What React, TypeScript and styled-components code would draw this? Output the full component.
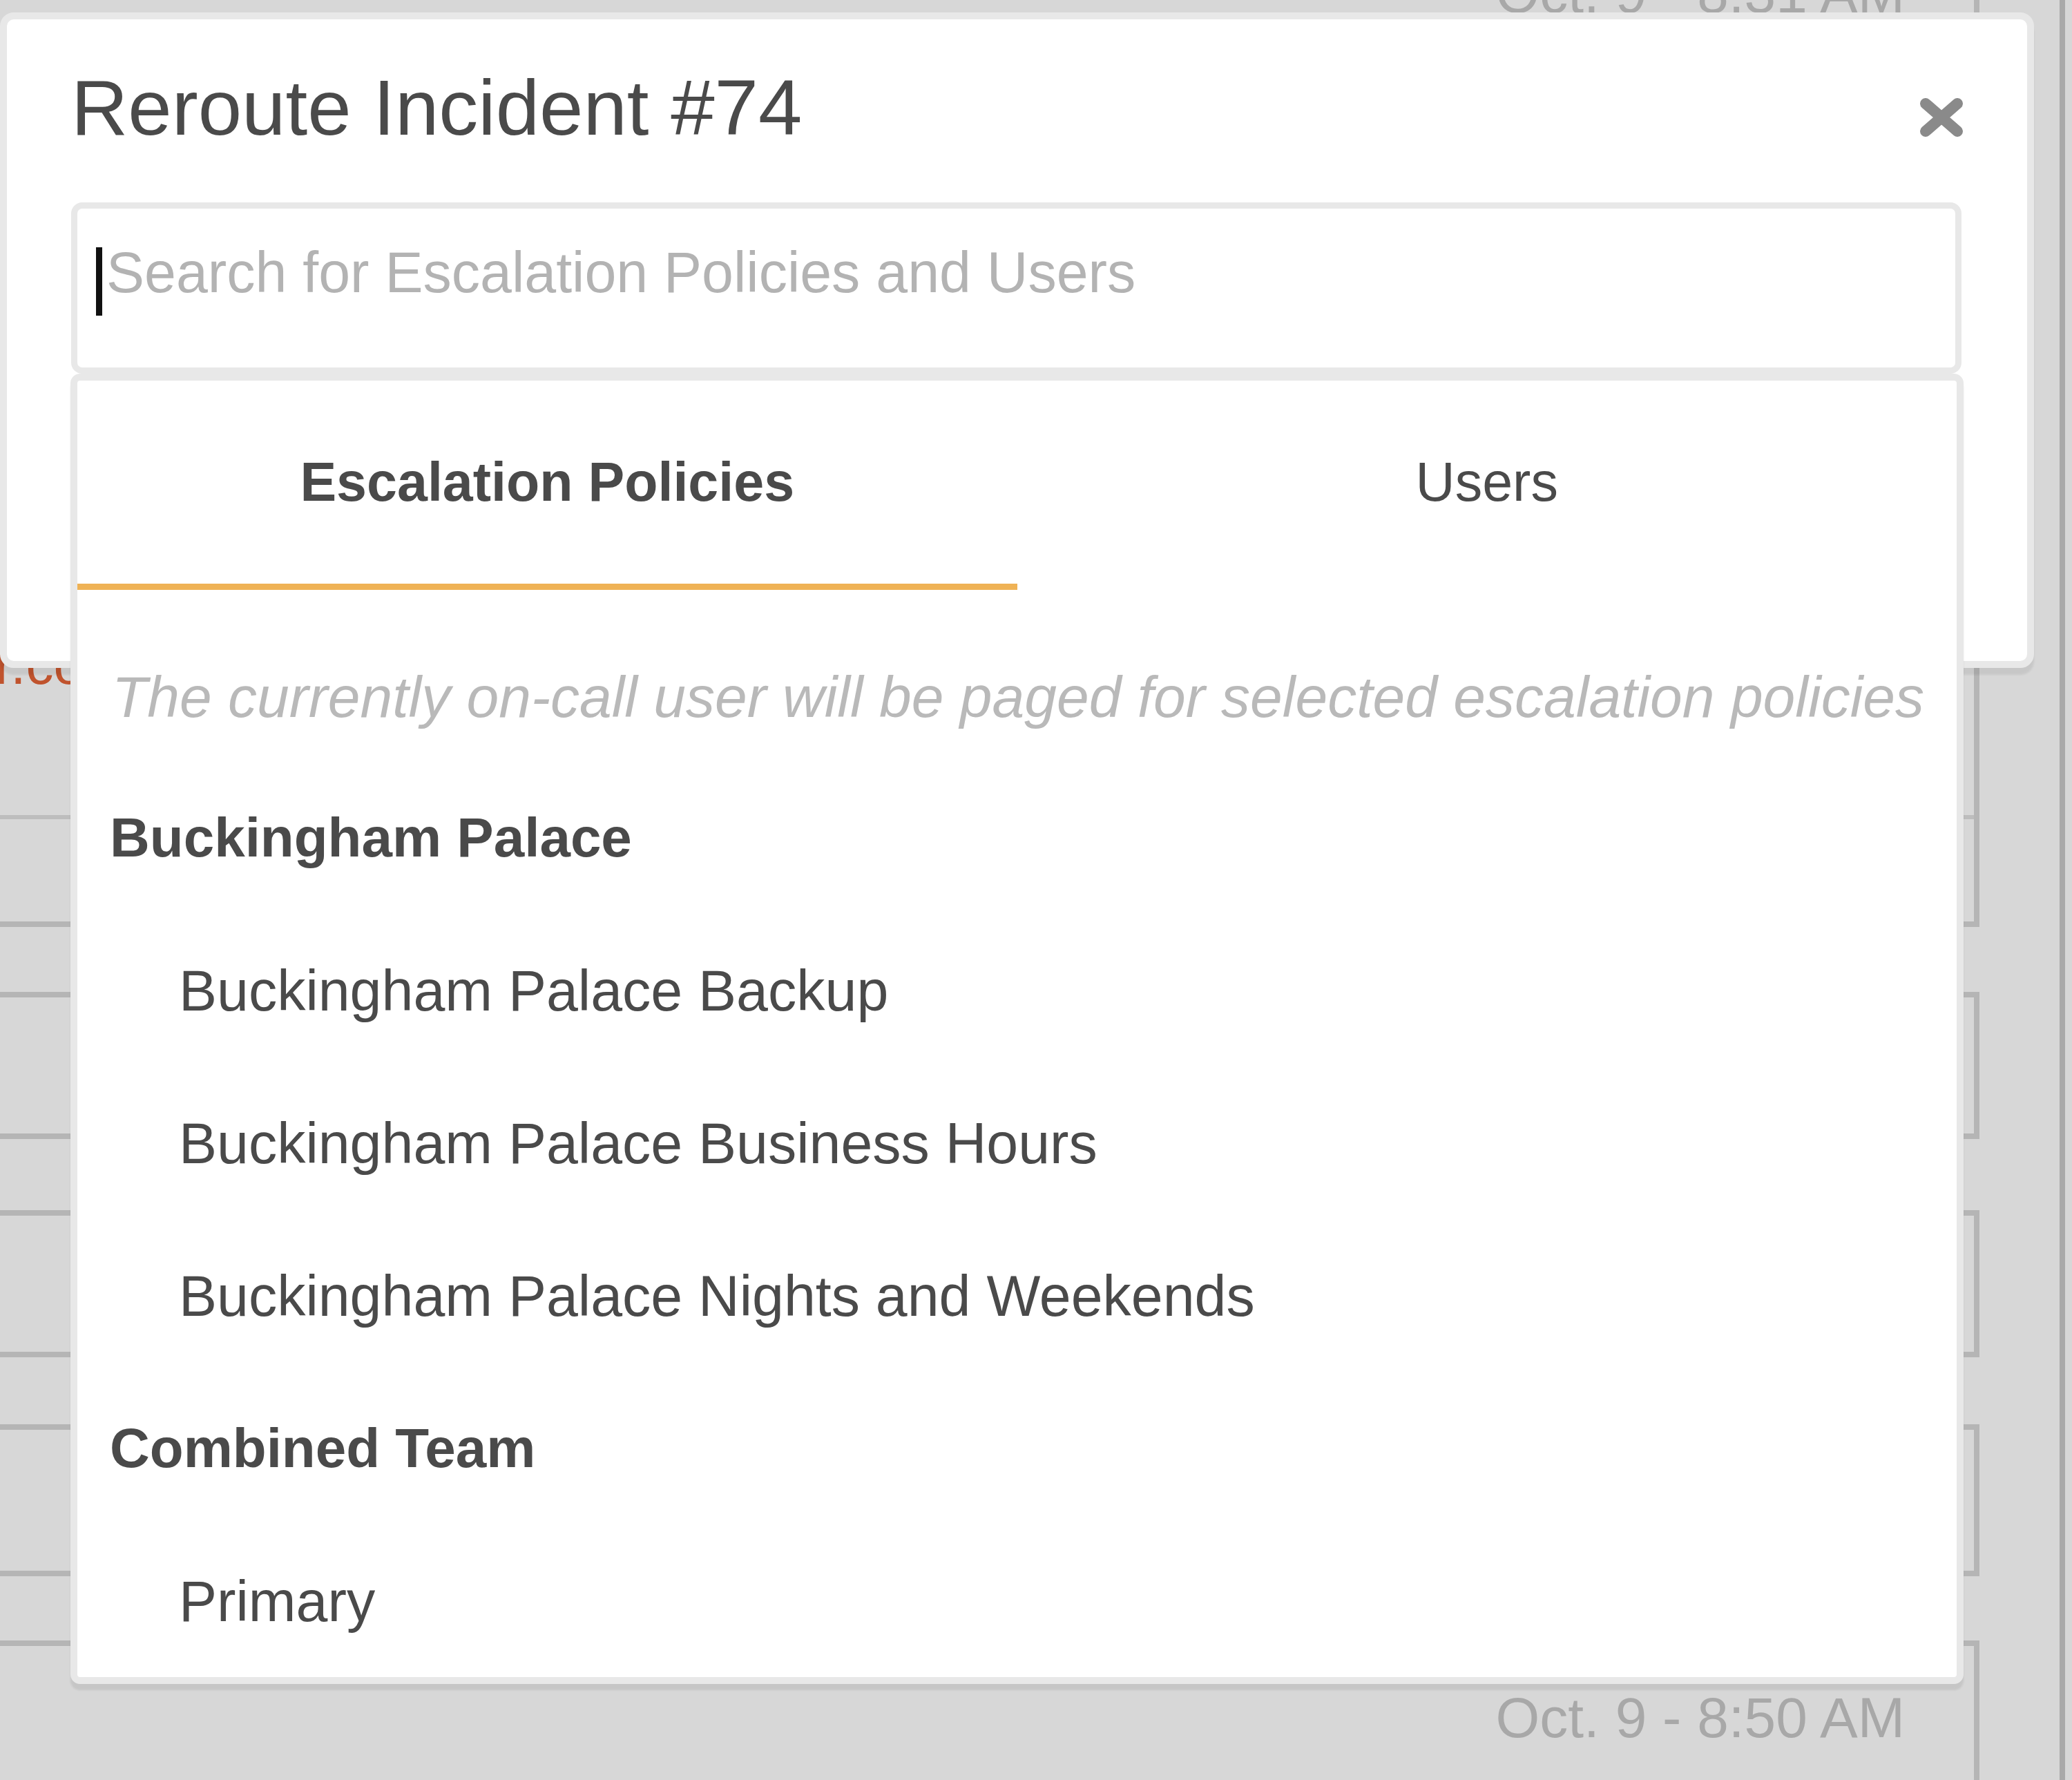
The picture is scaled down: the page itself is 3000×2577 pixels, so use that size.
import styled, { createGlobalStyle } from "styled-components";

const GlobalStyle = createGlobalStyle`
  html, body {
    margin: 0;
    padding: 0;
    background: #d7d7d7;
  }
  * {
    box-sizing: border-box;
  }
`;

const Screen = styled.div`
  position: relative;
  width: 3000px;
  height: 2577px;
  overflow: hidden;
  background: #d7d7d7;
  font-family: "Liberation Sans", Arial, sans-serif;
`;

/* ---------- dimmed page behind the modal ---------- */

const PageRow = styled.div`
  display: flex;
  height: 100%;
`;

const Timeline = styled.div`
  flex: none;
  width: 2906px;
  margin: -122px 0 0 -40px;
  display: flex;
  flex-direction: column;
`;

const Card = styled.div<{ $h: number; $gap: number }>`
  flex: none;
  height: ${(p) => p.$h}px;
  margin-top: ${(p) => p.$gap}px;
  border: 8px solid #b5b5b5;
  border-left: 0;
  display: flex;
  flex-direction: column;
`;

const Stamp = styled.div`
  align-self: flex-end;
  padding: 57px 100px 0 0;
  font-size: 82px;
  line-height: 94px;
  color: #a8a8a8;
  white-space: nowrap;
`;

const SourceLink = styled.div`
  margin: 880px 0 0 -207px;
  font-size: 80px;
  line-height: 92px;
  color: #c0532d;
  white-space: nowrap;
`;

const CardFooter = styled.div`
  margin-top: auto;
  height: 154px;
  border-top: 6px solid #bdbdbd;
`;

const SideRail = styled.div`
  flex: none;
  margin-left: 116px;
  height: 100%;
  border-left: 8px solid #a9a9a9;
`;

/* ---------- modal ---------- */

const Modal = styled.div`
  position: absolute;
  top: 18px;
  left: 0;
  width: 2945px;
  height: 949px;
  padding: 62px 95px 0 93px;
  background: #fff;
  border: 10px solid #e8e8e8;
  border-radius: 20px;
  box-shadow: 0 10px 3px rgba(0, 0, 0, 0.07);
`;

const Header = styled.div`
  display: flex;
  justify-content: space-between;
  align-items: flex-start;
`;

const Title = styled.h2`
  margin: 0;
  font-size: 114px;
  line-height: 131px;
  font-weight: 400;
  color: #4a4a4a;
`;

const CloseButton = styled.button`
  margin: 52px -3px 0 0;
  padding: 0;
  width: 64px;
  height: 56px;
  border: 0;
  background: none;
  display: flex;
`;

const SearchWrap = styled.div`
  position: relative;
  margin-top: 72px;
`;

const SearchBox = styled.div`
  height: 248px;
  padding: 45px 0 0 27px;
  border: 9px solid #e8e8e8;
  border-radius: 16px;
  display: flex;
  align-items: flex-start;
`;

const Caret = styled.span`
  flex: none;
  width: 9px;
  height: 99px;
  margin-top: 11px;
  background: #111;
`;

const Placeholder = styled.span`
  margin-left: 6px;
  font-size: 82.5px;
  line-height: 94px;
  color: #b3b3b3;
  white-space: nowrap;
`;

const Dropdown = styled.div`
  position: absolute;
  top: 100%;
  left: -1px;
  right: -3px;
  z-index: 2;
  background: #fff;
  border: 10px solid #e8e8e8;
  border-radius: 14px;
  box-shadow: 0 9px 3px rgba(0, 0, 0, 0.08);
`;

const Tabs = styled.div`
  display: flex;
`;

const Tab = styled.div<{ $active?: boolean }>`
  flex: 1;
  height: 303px;
  display: flex;
  align-items: center;
  justify-content: center;
  border-bottom: 9px solid ${(p) => (p.$active ? "#efb255" : "transparent")};
  font-size: 79px;
  line-height: 92px;
  font-weight: ${(p) => (p.$active ? 700 : 400)};
  color: #4a4a4a;
`;

const Hint = styled.div`
  padding: 107px 40px 45px 50px;
  font-size: 84px;
  line-height: 96px;
  font-style: italic;
  color: #b9b9b9;
  white-space: nowrap;
`;

const List = styled.div`
  display: flex;
  flex-direction: column;
`;

const Row = styled.div<{ $group?: boolean }>`
  height: 221px;
  display: flex;
  align-items: center;
  padding-left: ${(p) => (p.$group ? 47 : 147)}px;
  font-size: ${(p) => (p.$group ? 80 : 82.5)}px;
  line-height: 94px;
  font-weight: ${(p) => (p.$group ? 700 : 400)};
  color: #4a4a4a;
  white-space: nowrap;
`;

const cards = [
  { h: 1464, gap: 0, stamp: "Oct. 9 - 8:31 AM", first: true },
  { h: 213, gap: 94, stamp: "Oct. 9 - 8:35 AM" },
  { h: 213, gap: 103, stamp: "Oct. 9 - 8:40 AM" },
  { h: 220, gap: 97, stamp: "Oct. 9 - 8:45 AM" },
  { h: 500, gap: 93, stamp: "Oct. 9 - 8:50 AM" },
];

const policies = [
  { label: "Buckingham Palace", group: true },
  { label: "Buckingham Palace Backup" },
  { label: "Buckingham Palace Business Hours" },
  { label: "Buckingham Palace Nights and Weekends" },
  { label: "Combined Team", group: true },
  { label: "Primary" },
];

function CloseIcon() {
  return (
    <svg width="64" height="56" viewBox="0 0 64 56">
      <path
        d="M9 8 L55 48 M55 8 L9 48"
        stroke="#8a8a8a"
        strokeWidth="16"
        strokeLinecap="round"
        fill="none"
      />
    </svg>
  );
}

export default function App() {
  return (
    <>
      <GlobalStyle />
      <Screen>
        <PageRow>
          <Timeline>
            {cards.map((c) => (
              <Card key={c.stamp} $h={c.h} $gap={c.gap}>
                <Stamp>{c.stamp}</Stamp>
                {c.first && (
                  <>
                    <SourceLink>monitor.com</SourceLink>
                    <CardFooter />
                  </>
                )}
              </Card>
            ))}
          </Timeline>
          <SideRail />
        </PageRow>

        <Modal>
          <Header>
            <Title>Reroute Incident #74</Title>
            <CloseButton aria-label="Close">
              <CloseIcon />
            </CloseButton>
          </Header>
          <SearchWrap>
            <SearchBox>
              <Caret />
              <Placeholder>Search for Escalation Policies and Users</Placeholder>
            </SearchBox>
            <Dropdown>
              <Tabs>
                <Tab $active>Escalation Policies</Tab>
                <Tab>Users</Tab>
              </Tabs>
              <Hint>
                The currently on-call user will be paged for selected escalation
                policies
              </Hint>
              <List>
                {policies.map((p) => (
                  <Row key={p.label} $group={p.group}>
                    {p.label}
                  </Row>
                ))}
              </List>
            </Dropdown>
          </SearchWrap>
        </Modal>
      </Screen>
    </>
  );
}
